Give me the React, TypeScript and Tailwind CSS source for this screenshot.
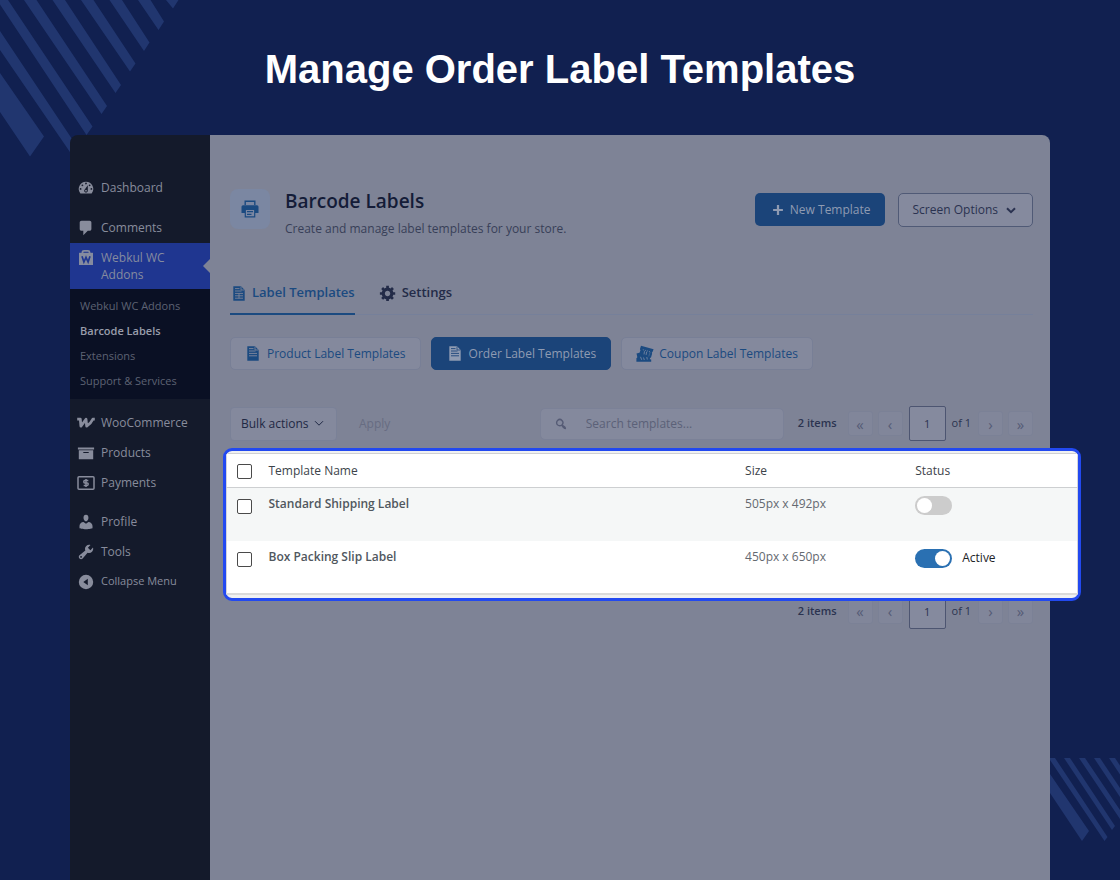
import type { ReactNode } from 'react';

type IconProps = { className?: string };

function Glyph({ d, className = '' }: IconProps & { d: string }) {
  return (
    <svg viewBox="0 0 20 20" className={`size-[18px] shrink-0 ${className}`} fill="currentColor" fillRule="evenodd" aria-hidden="true">
      <path d={d} />
    </svg>
  );
}

const DASHBOARD =
  'M3.76 16h12.48A7.998 7.998 0 0 0 10 3a7.998 7.998 0 0 0-6.24 13zM10 4c.55 0 1 .45 1 1s-.45 1-1 1-1-.45-1-1 .45-1 1-1zM6 6c.55 0 1 .45 1 1s-.45 1-1 1-1-.45-1-1 .45-1 1-1zm8 0c.55 0 1 .45 1 1s-.45 1-1 1-1-.45-1-1 .45-1 1-1zm-5.37 5.55L12 7v6c0 1.1-.9 2-2 2s-2-.9-2-2c0-.57.24-1.08.63-1.45zM4 10c.55 0 1 .45 1 1s-.45 1-1 1-1-.45-1-1 .45-1 1-1zm12 0c.55 0 1 .45 1 1s-.45 1-1 1-1-.45-1-1 .45-1 1-1zm-5 3c0-.55-.45-1-1-1s-1 .45-1 1 .45 1 1 1 1-.45 1-1z';
const COMMENTS = 'M5 2h9c1.1 0 2 .9 2 2v7c0 1.1-.9 2-2 2h-2l-5 5v-5H5c-1.1 0-2-.9-2-2V4c0-1.1.9-2 2-2z';
const ARCHIVE = 'M19 4v2H1V4h18zM2 7h16v10H2V7zm11 3V9H7v1h6z';
const USER =
  'M10 9.25c-2.27 0-2.73-3.44-2.73-3.44C7 4.02 7.82 2 9.97 2c2.16 0 2.98 2.02 2.71 3.81 0 0-.41 3.44-2.68 3.44zm0 2.57L12.72 10c2.39 0 4.52 2.33 4.52 4.53v2.49s-3.65 1.13-7.24 1.13c-3.65 0-7.24-1.13-7.24-1.13v-2.49c0-2.25 1.94-4.48 4.47-4.48z';
const TOOLS =
  'M16.68 9.77a4.543 4.543 0 0 1-4.95.99l-5.41 6.52c-.99.99-2.59.99-3.58 0s-.99-2.59 0-3.57l6.52-5.42c-.68-1.65-.35-3.61.99-4.95 1.28-1.28 3.12-1.62 4.72-1.06l-2.89 2.89 2.82 2.82 2.86-2.87c.53 1.58.18 3.39-1.08 4.65zM3.81 16.21c.4.39 1.04.39 1.43 0 .4-.4.4-1.04 0-1.43-.39-.4-1.03-.4-1.43 0a1.02 1.02 0 0 0 0 1.43z';
const COLLAPSE = 'M10 2a8 8 0 1 1 0 16 8 8 0 0 1 0-16zm2 4.5L7 10l5 3.5v-7z';
const SEARCH =
  'M12.14 4.18a5.504 5.504 0 0 1 .72 6.89c.12.1.22.21.36.31.2.16.47.36.81.59.34.24.56.39.66.47.42.31.73.57.94.78.32.32.6.65.84 1 .25.35.44.69.59 1.04.14.35.21.68.18 1-.02.32-.14.59-.36.81s-.49.34-.81.36c-.31.02-.65-.04-.99-.19-.35-.14-.7-.34-1.04-.59-.35-.24-.68-.52-1-.84-.21-.21-.47-.52-.77-.93-.1-.13-.25-.35-.47-.66-.22-.32-.4-.57-.56-.78-.16-.2-.29-.35-.44-.5-2.07 1.09-4.69.76-6.44-.98-2.14-2.15-2.14-5.64 0-7.78a5.497 5.497 0 0 1 7.78 0zm-1.41 6.36a3.513 3.513 0 0 0 0-4.95c-1.37-1.37-3.58-1.37-4.95 0s-1.37 3.58 0 4.95c1.37 1.36 3.58 1.36 4.95 0z';
const GEAR =
  'M18 12h-2.18c-.17.7-.44 1.35-.81 1.93l1.54 1.54-2.1 2.1-1.54-1.54c-.58.36-1.23.63-1.91.79V19H8v-2.18c-.68-.16-1.33-.43-1.91-.79l-1.54 1.54-2.12-2.12 1.54-1.54c-.36-.58-.63-1.23-.79-1.91H1V9.03h2.17c.16-.7.44-1.35.8-1.94L2.43 5.55l2.1-2.1 1.54 1.54c.58-.37 1.24-.64 1.93-.81V2h3v2.18c.68.16 1.33.43 1.91.79l1.54-1.54 2.12 2.12-1.54 1.54c.36.59.64 1.24.8 1.94H18V12zm-8.5 1.5c1.66 0 3-1.34 3-3s-1.34-3-3-3-3 1.34-3 3 1.34 3 3 3z';
const PLUS = 'M8.4 3h3.2v5.400H17v3.200h-5.400V17H8.400v-5.400H3V8.400h5.400z';

function BagIcon() {
  return (
    <svg viewBox="0 0 18 18" className="size-[18px] shrink-0" aria-hidden="true">
      <path d="M5.5 5V3.2Q5.5 1.800 7 1.800h4Q12.500 1.800 12.500 3.200V5" fill="none" stroke="currentColor" strokeWidth="1.800" />
      <path d="M2 3.800h14v12.200H2z" fill="currentColor" />
      <path d="M5 7.200l1.900 5.800L9 8.400l2.100 4.600L13 7.200" fill="none" stroke="#1f3690" strokeWidth="1.700" />
    </svg>
  );
}

function WooIcon() {
  return (
    <svg viewBox="0 0 18 18" className="size-[18px] shrink-0" fill="none" stroke="currentColor" strokeWidth="2.800" strokeLinejoin="round" aria-hidden="true">
      <path d="M.2 5.200H3.300L3.900 12.200L9 5.200L9.700 12.200Q14 9.200 15.800 5.200H17.800" />
    </svg>
  );
}

function PaymentIcon() {
  return (
    <svg viewBox="0 0 18 18" className="size-[18px] shrink-0" fill="none" stroke="currentColor" aria-hidden="true">
      <rect x="1" y="2.700" width="16" height="12.600" rx="1" strokeWidth="1.500" />
      <path d="M11.300 6.600H7.700Q6.800 6.600 6.800 7.700Q6.800 8.900 7.800 8.900H10.200Q11.200 8.900 11.200 10.100Q11.200 11.400 10.200 11.400H6.700M9 4.900v8.200" strokeWidth="1.500" />
    </svg>
  );
}

function PrinterIcon() {
  return (
    <svg viewBox="0 0 18 18" className="size-[18px]" aria-hidden="true">
      <path d="M4.200 5V1.200h9.600V5" fill="none" stroke="#1b4a80" strokeWidth="1.400" />
      <path d="M2 5.200h14q1.500 0 1.500 1.500V13H14v-2.500H4V13H.5V6.700Q.5 5.200 2 5.200z" fill="#1b4a80" />
      <path d="M4.300 9.500h9.400v7.300H4.300z" fill="#7b87a2" stroke="#1b4a80" strokeWidth="1.200" />
      <path d="M6 11.700h6M6 14.300h4.500" stroke="#1b4a80" strokeWidth="1.300" />
    </svg>
  );
}

function DocIcon({ lines, grid = false, className = '' }: IconProps & { lines: string; grid?: boolean }) {
  return (
    <svg viewBox="0 0 12 15" className={`h-[15px] w-[12px] shrink-0 ${className}`} aria-hidden="true">
      <path d="M.3.300H8L11.700 4v10.700H.3z" fill="currentColor" />
      <path d="M8 .6V4h3.400" fill="none" stroke={lines} strokeWidth=".8" />
      <path d="M2 2.600h4.500M2 5h6.500M2 7.400h8M2 9.800h8" stroke={lines} strokeWidth=".9" />
      {grid && <path d="M6 7.400v5M2 12.200h8" stroke={lines} strokeWidth=".9" />}
    </svg>
  );
}

function TicketIcon() {
  return (
    <svg viewBox="0 0 18 18" className="size-[18px] shrink-0" aria-hidden="true">
      <path d="M5 .8l12.600 3.400-1 2.600q-1.200.6-.5 1.900L15 12.500q-1.500.3-1.100 1.700l1.300.4v2.200H.4v-3.500q1.400-.4.700-2.400L.5 8.500l3-.7 1-2.600q-1-1-.3-1.900z" fill="#1b4a80" />
      <path d="M6.800 4.700l7.400 2-1.500 5" fill="none" stroke="#7e8ba5" strokeWidth=".7" strokeDasharray="1.200 .9" />
      <path d="M8.500 6.200l-.5 3.200M10.700 6.700l-.6 3.200M4.500 11.800l1.200 3M7.500 12.500l.8 2.500M10.800 12l.5 2.500" stroke="#7e8ba5" strokeWidth=".8" />
    </svg>
  );
}

function Chevron({ className = 'stroke-2' }: IconProps) {
  return (
    <svg viewBox="0 0 10 7" className={`h-[7px] w-[10px] shrink-0 ${className}`} fill="none" stroke="currentColor" aria-hidden="true">
      <path d="M1 1.200l4 4 4-4" />
    </svg>
  );
}

function MenuItem({ icon, children, className = '' }: { icon: ReactNode; children: ReactNode; className?: string }) {
  return (
    <a href="#" className={`flex h-[30px] items-center gap-[6px] pl-[7px] text-[#888c9c] ${className}`}>
      {icon}
      {children}
    </a>
  );
}

function Sidebar() {
  return (
    <nav className="w-[140px] shrink-0 rounded-tl-lg bg-[#141a2b] pt-[38px]">
      <MenuItem icon={<Glyph d={DASHBOARD} />}>Dashboard</MenuItem>
      <MenuItem className="mt-[10px]" icon={<Glyph d={COMMENTS} />}>Comments</MenuItem>
      <a href="#" className="relative flex h-[46px] items-start gap-[6px] bg-[#1f3690] pt-[6px] pl-[7px] leading-[17px] text-[#858b9f]">
        <BagIcon />
        <span>Webkul WC Addons</span>
        <span className="absolute top-[16px] right-0 border-y-[7px] border-r-[7px] border-y-transparent border-r-[#7e8396]" />
      </a>
      <ul className="flex flex-col gap-px bg-[#0a1024] pt-[5px] pb-[6px] pl-[10px] text-[11px] leading-[24px] text-[#5d6273]">
        <li><a href="#">Webkul WC Addons</a></li>
        <li><a href="#" className="font-semibold text-[#999dab]">Barcode Labels</a></li>
        <li><a href="#">Extensions</a></li>
        <li><a href="#">Support &amp; Services</a></li>
      </ul>
      <MenuItem className="mt-[9px]" icon={<WooIcon />}>WooCommerce</MenuItem>
      <MenuItem icon={<Glyph d={ARCHIVE} />}>Products</MenuItem>
      <MenuItem icon={<PaymentIcon />}>Payments</MenuItem>
      <MenuItem className="mt-[9px]" icon={<Glyph d={USER} />}>Profile</MenuItem>
      <MenuItem icon={<Glyph d={TOOLS} />}>Tools</MenuItem>
      <button type="button" className="flex h-[29px] items-center gap-[6px] pl-[7px] text-[11px] text-[#888c9c]">
        <Glyph d={COLLAPSE} />
        Collapse Menu
      </button>
    </nav>
  );
}

function PageButton({ label, children }: { label: string; children: ReactNode }) {
  return (
    <button type="button" aria-label={label} className="flex size-[25px] items-center justify-center rounded-[3px] border border-[#7b8196] bg-[#81869a] text-[15px] leading-[20px] text-[#555b76]">
      {children}
    </button>
  );
}

function Pagination() {
  return (
    <div className="flex items-center text-[11px] text-[#2b3350]">
      <span className="font-semibold">2 items</span>
      <div className="ml-[11px] flex gap-[5px]">
        <PageButton label="First page">«</PageButton>
        <PageButton label="Previous page">‹</PageButton>
      </div>
      <input aria-label="Current page" defaultValue="1" className="ml-[6px] h-[35px] w-[37px] rounded-[2px] border border-[#4d5571] bg-[#858a9e] text-center" />
      <span className="ml-[6px] font-medium">of 1</span>
      <div className="ml-[7px] flex gap-[5px]">
        <PageButton label="Next page">›</PageButton>
        <PageButton label="Last page">»</PageButton>
      </div>
    </div>
  );
}

function Tick({ label }: { label: string }) {
  return <input type="checkbox" aria-label={label} className="block size-[15px] appearance-none rounded-[2px] border border-[#4a4a4a] bg-white checked:bg-[#2a6fb3]" />;
}

const rows = [
  { name: 'Standard Shipping Label', size: '505px x 492px', active: false },
  { name: 'Box Packing Slip Label', size: '450px x 650px', active: true },
];

function TemplateTable() {
  return (
    <section className="relative z-10 mt-[7px] -mr-[48px] -ml-[7px] overflow-hidden rounded-[9px] border-[3px] border-[#2249f0] bg-[#f0f1f1] pt-[2px] pb-[3px]">
      <table className="w-full table-fixed border-collapse border-x border-t border-b-2 border-x-[#d3d4da] border-t-[#cfd0d3] border-b-[#dadada] bg-white text-left text-[#50575e]">
        <thead>
          <tr className="h-[34px] border-b border-[#cdcfd1] text-[#3c434a]">
            <th className="w-[42px] pt-[2px] pl-[10px]"><Tick label="Select all" /></th>
            <th className="w-[56%] font-normal">Template Name</th>
            <th className="w-[20%] font-normal">Size</th>
            <th className="font-normal">Status</th>
          </tr>
        </thead>
        <tbody>
          {rows.map((row) => (
            <tr key={row.name} className="h-[53px] align-top leading-[18px] odd:bg-[#f5f7f7]">
              <td className="pt-[11px] pl-[10px]"><Tick label={`Select ${row.name}`} /></td>
              <td className="pt-[7px] font-semibold">{row.name}</td>
              <td className="pt-[7px] text-[#646970]">{row.size}</td>
              <td className="pt-[8px]">
                <label className="flex items-center gap-[10px] font-medium text-[#1d2327]">
                  <input
                    type="checkbox"
                    role="switch"
                    aria-label={`${row.name} status`}
                    defaultChecked={row.active}
                    className="flex h-[19px] w-[37px] appearance-none items-center rounded-full bg-[#cccccc] px-[2px] before:size-[15px] before:rounded-full before:bg-white checked:justify-end checked:bg-[#2a70b2]"
                  />
                  {row.active && 'Active'}
                </label>
              </td>
            </tr>
          ))}
        </tbody>
      </table>
    </section>
  );
}

const pill = 'flex h-[33px] items-center rounded-[5px] border pr-[14px] font-medium';

export default function App() {
  return (
    <div className="relative flex min-h-screen flex-col overflow-hidden bg-[#112050] font-['Open_Sans','Noto_Sans',sans-serif] text-[12px]">
      <svg viewBox="0 0 180 160" className="absolute top-0 left-0 h-[160px] w-[180px]" fill="#21366f" aria-hidden="true">
        <path d="M0 73l44 63.500L30 156.500 0 112zM0 31l78 117-5 8.500L0 50zM-3 0H8l84.500 126.500-6 8.500zM24 0h12.500L107 106l-5.500 8zM52.500 0H65l56 85-5.500 8zM81 0h12.500l42 63.500-5.500 8zM109.500 0H122l27.500 42.500-5.500 8.500zM138 0h12.500l13.500 21.500-5.500 8.500zM166 0h12.500l-5.500 8.500z" />
      </svg>
      <svg viewBox="0 0 70 122" className="absolute right-0 bottom-0 h-[122px] w-[70px]" fill="#21366f" aria-hidden="true">
        <path d="M0 16l39 57-7 10L0 35zM0 0h5l52.500 79-3 4L0 2zM14 0h6l45 68-3 4zM29 0h6l35 52v9zM44 0h6l20 30v9zM59 0h6l5 7.500v9z" />
      </svg>

      <header className="relative flex h-[135px] items-center justify-center pt-[3px]">
        <h1 className="font-['Liberation_Sans',Arial,sans-serif] text-[40px] font-bold text-white">Manage Order Label Templates</h1>
      </header>

      <div className="relative mx-[70px] flex flex-1">
        <Sidebar />
        <main className="min-w-0 flex-1 rounded-tr-lg bg-[#7e8396] pt-[54px] pr-[17px] pl-[20px]">
          <div className="flex items-start">
            <div className="flex size-[40px] items-center justify-center rounded-lg bg-[#7b87a2]">
              <PrinterIcon />
            </div>
            <div className="ml-[15px] flex-1">
              <h2 className="text-[19px] leading-[24px] font-semibold text-[#141c38]">Barcode Labels</h2>
              <p className="mt-[7px] leading-[18px] text-[#383f58]">Create and manage label templates for your store.</p>
            </div>
            <div className="mt-[4px] flex gap-[13px] font-medium">
              <button type="button" className="flex h-[33px] items-center gap-[3px] rounded-[5px] bg-[#1b4479] px-[14px] text-[#8f9bb2]">
                <Glyph d={PLUS} className="p-[2px]" />
                New Template
              </button>
              <button type="button" className="flex h-[34px] items-center gap-[8px] rounded-[5px] border border-[#505a76] bg-[#858a9e] pr-[16px] pl-[14px] text-[#2a3250]">
                Screen Options
                <Chevron />
              </button>
            </div>
          </div>

          <nav className="mt-[35px] flex h-[42px] gap-[24px] border-b border-[#76809a] text-[13px] font-semibold">
            <a href="#" className="-mb-px flex items-center gap-[7px] border-b-2 border-[#1b4a80] pl-[3px] text-[#1b4a80]">
              <DocIcon lines="#7e8396" grid />
              Label Templates
            </a>
            <a href="#" className="-mb-px flex items-center gap-[5px] border-b-2 border-transparent text-[#232b48]">
              <Glyph d={GEAR} />
              Settings
            </a>
          </nav>

          <div className="mt-[22px] flex gap-[10px]">
            <button type="button" className={`${pill} gap-[8px] border-[#787f96] bg-[#84899d] pl-[16px] text-[#1b4a80]`}>
              <DocIcon lines="#84899d" />
              Product Label Templates
            </button>
            <button type="button" className={`${pill} gap-[8px] border-[#1b4479] bg-[#1b4479] pl-[17px] text-[#8f9bb2]`}>
              <DocIcon lines="#1b4479" />
              Order Label Templates
            </button>
            <button type="button" className={`${pill} gap-[5px] border-[#787f96] bg-[#84899d] pl-[14px] text-[#1b4a80]`}>
              <TicketIcon />
              Coupon Label Templates
            </button>
          </div>

          <div className="mt-[36px] flex h-[35px] items-center">
            <div className="relative flex items-center text-[#1f2844]">
              <select aria-label="Bulk actions" className="h-[34px] w-[107px] appearance-none rounded-[4px] border border-[#7a8197] bg-[#84899d] pl-[10px]">
                <option>Bulk actions</option>
                <option>Delete</option>
              </select>
              <Chevron className="pointer-events-none absolute right-[13px] stroke-1" />
            </div>
            <button type="button" disabled className="ml-[22px] text-[#676c82]">Apply</button>
            <label className="ml-auto flex h-[32px] w-[244px] items-center gap-[16px] rounded-[5px] border border-[#7b8197] bg-[#84899d] pl-[11px] text-[#555b75]">
              <Glyph d={SEARCH} className="p-[2px]" />
              <input type="search" aria-label="Search templates" placeholder="Search templates..." className="min-w-0 flex-1 outline-none placeholder:text-[#5b6178]" />
            </label>
            <div className="ml-[14px]">
              <Pagination />
            </div>
          </div>

          <TemplateTable />

          <div className="-mt-[7px] flex justify-end">
            <Pagination />
          </div>
        </main>
      </div>
    </div>
  );
}
